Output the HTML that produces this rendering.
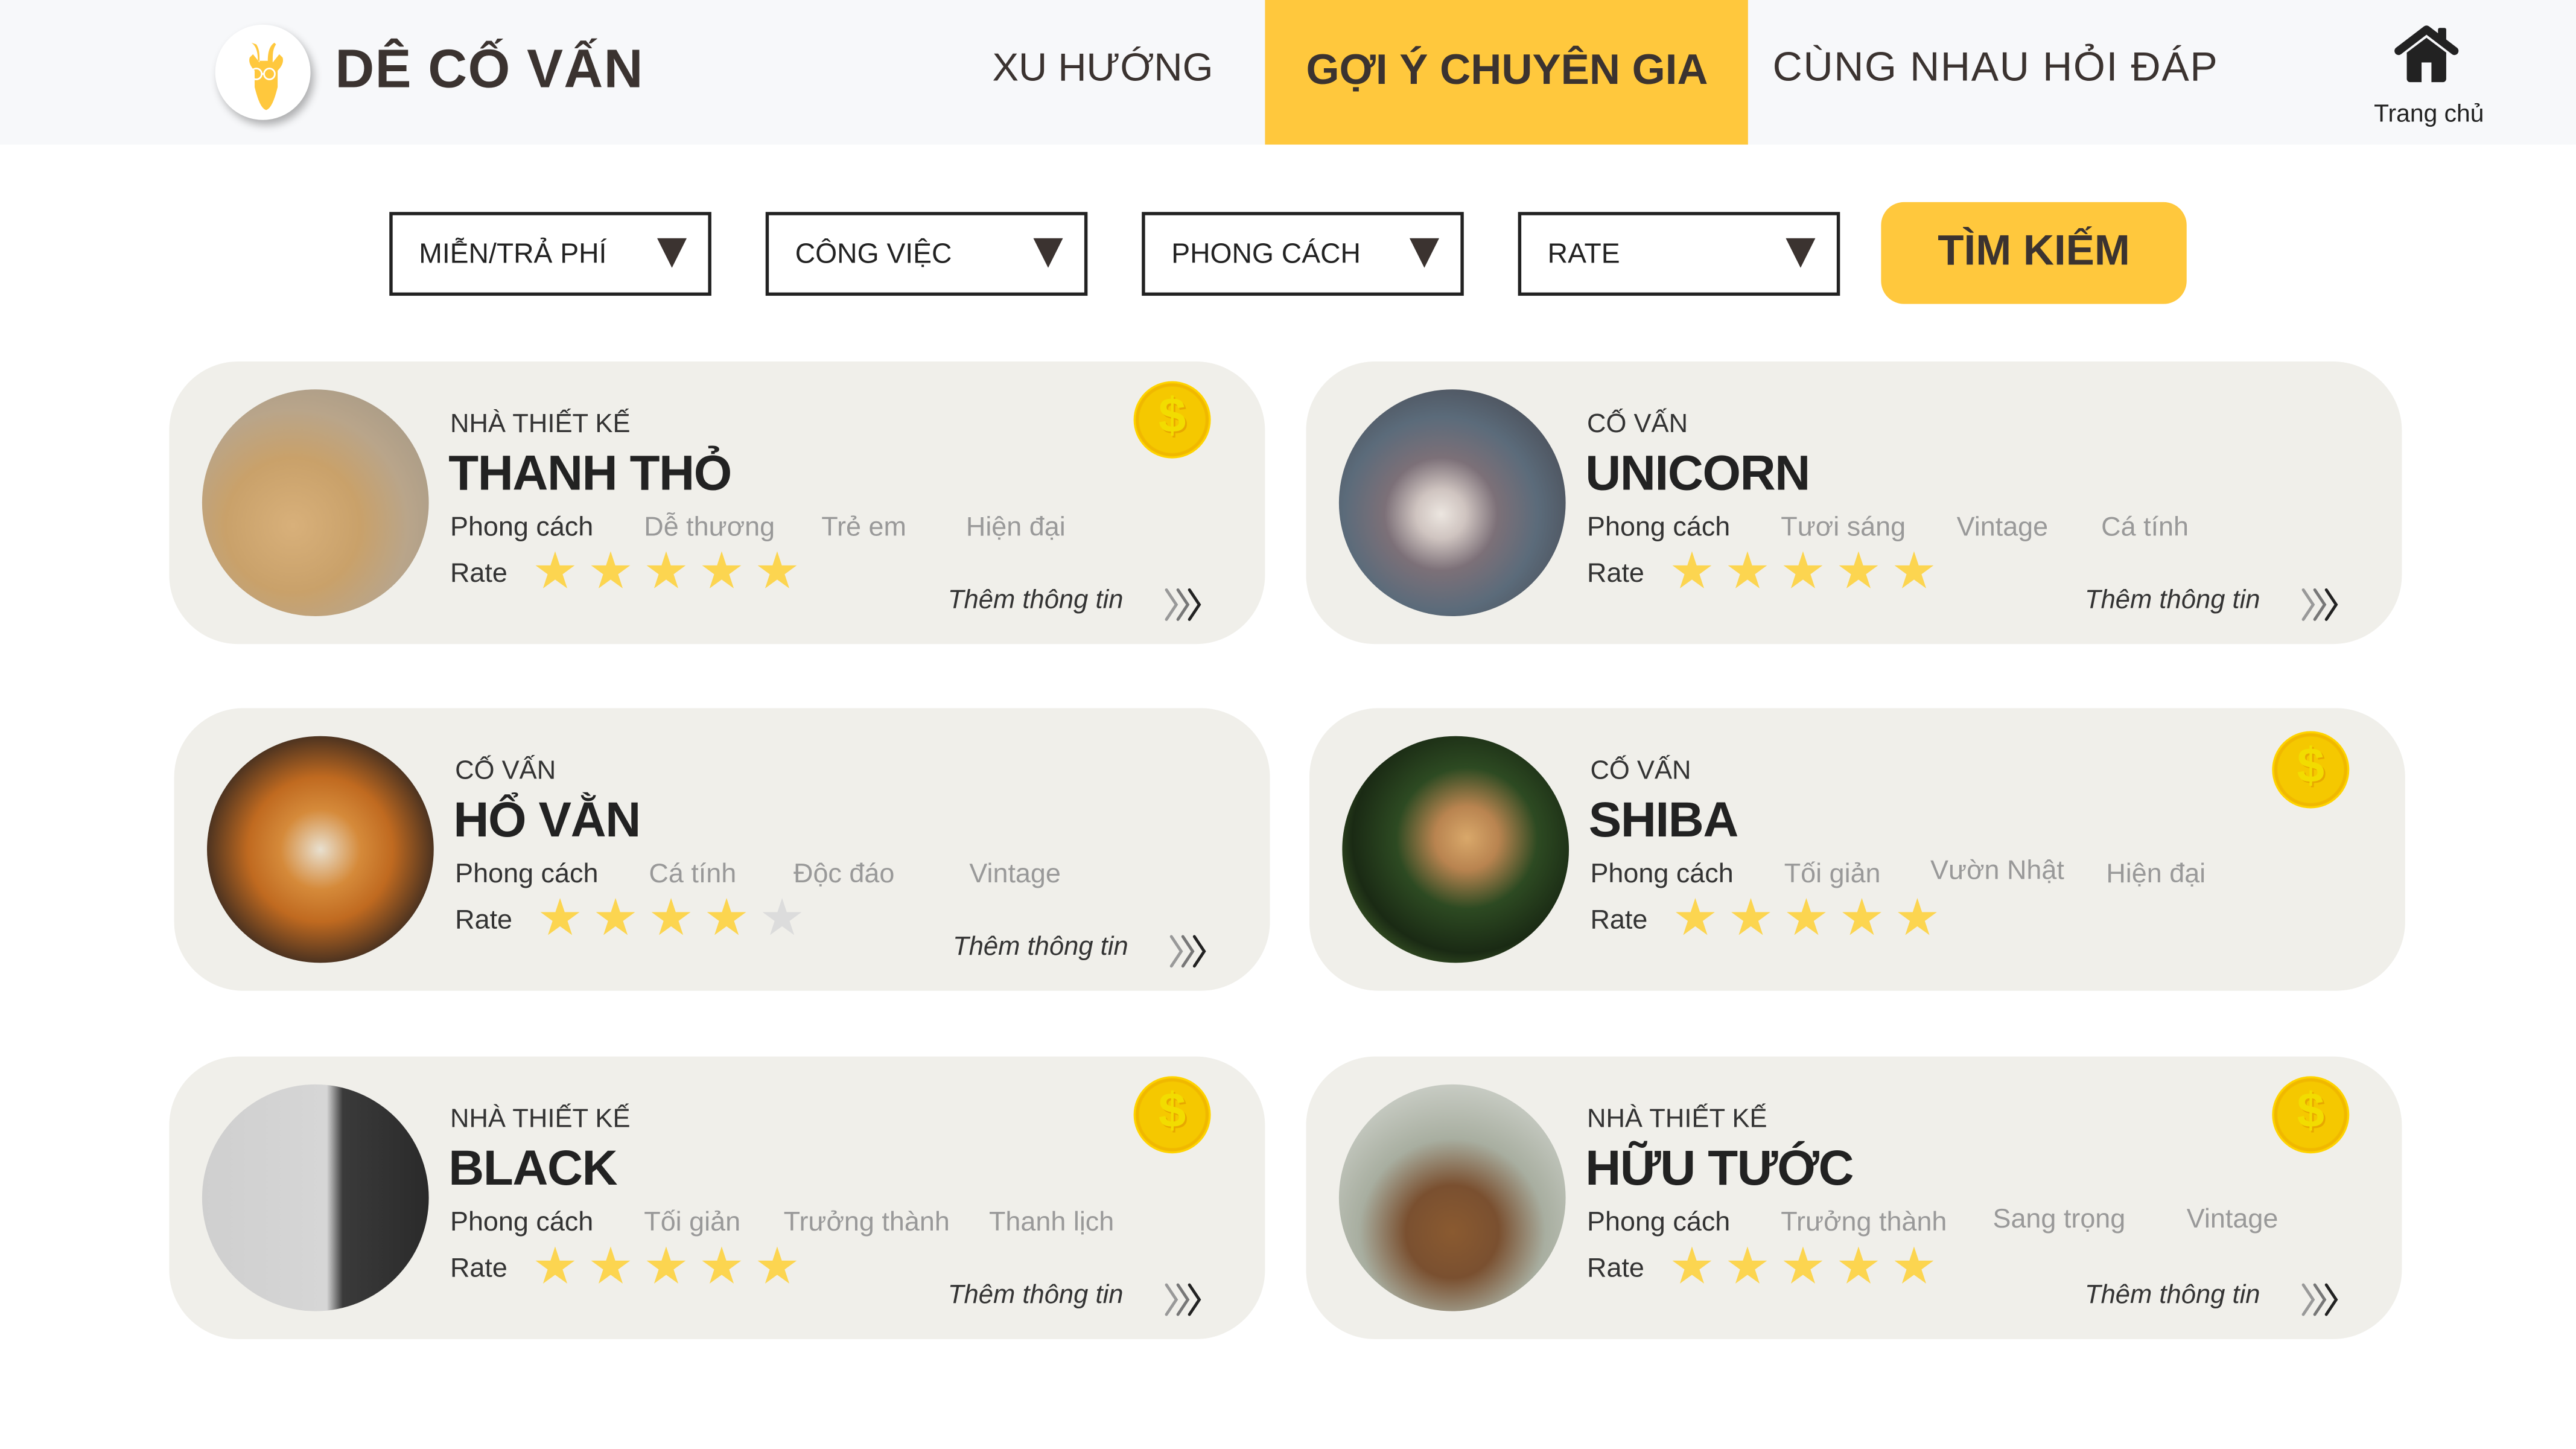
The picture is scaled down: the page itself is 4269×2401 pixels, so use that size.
<!DOCTYPE html>
<html><head><meta charset="utf-8">
<style>
*{margin:0;padding:0;box-sizing:border-box}
html,body{width:4269px;height:2400px;overflow:hidden;background:#fff}
#w{position:absolute;left:0;top:0;width:1568px;height:882px;transform:scale(2.72258);transform-origin:0 0;font-family:"Liberation Sans","DejaVu Sans",sans-serif;color:#333}
.a{position:absolute;white-space:nowrap}
.hdr{left:0;top:0;width:1568px;height:88px;background:#f7f8fa}
.nav{font-size:25px;color:#3b3330;top:27px}
.dd{border:2px solid #222;width:196px;height:51px;background:#fff;top:129px}
.dd span{position:absolute;left:16px;top:14px;font-size:17px;color:#222}
.dd i{position:absolute;right:13px;top:14px;width:0;height:0;border-left:9px solid transparent;border-right:9px solid transparent;border-top:18px solid #3b3330}
.card{width:667px;height:172px;background:#f0efea;border-radius:42px}
.pic{left:20px;top:17px;width:138px;height:138px;border-radius:50%}
.k{left:171px;top:30px;font-size:16px;color:#333}
.n{left:170px;top:52px;font-size:30px;font-weight:bold;color:#222;letter-spacing:-0.5px}
.t{top:92px;font-size:16.5px;color:#999}
.t0{color:#333}
.r{left:171px;top:120px;font-size:16.5px;color:#333}
.st{top:108px;font-size:31px;color:#fcd550;line-height:40px;letter-spacing:6px!important}
.more{left:474px;top:137px;font-size:16px;font-style:italic;color:#333}
.chev{left:605px;top:137px}
.coin{width:47px;height:47px;border-radius:50%;background:radial-gradient(circle,#f5c800 0 60%,#f0b800 62% 66%,#ffd400 68%);top:12px}
.coin b{position:absolute;left:0;top:5px;width:47px;text-align:center;font-size:30px;color:#f2dc00;font-weight:bold;text-shadow:1px 1px 0 #e8a800}
</style></head><body><div id="w">
<div class="a hdr"></div>
<div class="a" style="left:131px;top:15px;width:58px;height:58px;border-radius:50%;background:#fff;box-shadow:2px 3px 5px rgba(0,0,0,.3)">
<svg width="58" height="58" viewBox="0 0 58 58"><g fill="#ffc83d"><path d="M22 11c3 2 4 6 4 11h6c0-5 1-9 4-11l1 1c-2 3-2 6-2 11l4-5 2 2c1 3-1 6-3 8v10c-2 8-4 13-7 14-3-1-5-6-7-14V28c-2-2-4-5-3-8l2-2 4 5c0-5 0-8-2-11z"/></g><g fill="none" stroke="#fff" stroke-width="1"><circle cx="25" cy="30" r="3.3"/><circle cx="33" cy="30" r="3.3"/><path d="M28.3 30h1.4"/></g></svg></div>
<div class="a" style="left:204px;top:23px;font-size:33px;font-weight:bold;color:#3b3330;letter-spacing:0.5px">DÊ CỐ VẤN</div>
<div class="a nav" style="left:604px;font-size:24px;top:28px">XU HƯỚNG</div>
<div class="a" style="left:770px;top:0;width:294px;height:88px;background:#ffc83d"></div>
<div class="a nav" style="left:795px;font-weight:bold;font-size:26px">GỢI Ý CHUYÊN GIA</div>
<div class="a nav" style="left:1079px;letter-spacing:0.6px">CÙNG NHAU HỎI ĐÁP</div>
<svg class="a" style="left:1457px;top:12px" width="42" height="40" viewBox="0 0 42 40"><path d="M3 19L20 6 37 19" fill="none" stroke="#222" stroke-width="5" stroke-linecap="round" stroke-linejoin="round"/><rect x="27" y="5" width="5" height="9" rx="1" fill="#222"/><path d="M8 20L20 11 32 20V36a2 2 0 0 1-2 2H23V26h-6v12H10a2 2 0 0 1-2-2z" fill="#222"/></svg>
<div class="a" style="left:1445px;top:61px;font-size:15px;color:#222">Trang chủ</div>

<div class="a dd" style="left:237px"><span>MIỄN/TRẢ PHÍ</span><i></i></div>
<div class="a dd" style="left:466px"><span>CÔNG VIỆC</span><i></i></div>
<div class="a dd" style="left:695px"><span>PHONG CÁCH</span><i></i></div>
<div class="a dd" style="left:924px"><span>RATE</span><i></i></div>
<div class="a" style="left:1145px;top:123px;width:186px;height:62px;background:#ffc83d;border-radius:14px;text-align:center;line-height:58px;font-size:26px;font-weight:bold;color:#3b3330">TÌM KIẾM</div>

<div class="a card" style="left:103px;top:220px">
<div class="a pic" style="background:radial-gradient(circle at 40% 60%,#d8b07a 0,#c9a16a 35%,#b9a58a 60%,#9c9385 100%)"></div>
<div class="a k">NHÀ THIẾT KẾ</div><div class="a n">THANH THỎ</div>
<div class="a t t0" style="left:171px">Phong cách</div><div class="a t" style="left:289px">Dễ thương</div><div class="a t" style="left:397px">Trẻ em</div><div class="a t" style="left:485px">Hiện đại</div>
<div class="a r">Rate</div>
<div class="a st" style="left:221px">★★★★★</div>
<div class="a more">Thêm thông tin</div>
<svg class="a chev" width="26" height="22" viewBox="0 0 26 22"><g fill="none" stroke-width="1.8" stroke-linecap="round"><path d="M2 2l6 9-6 9" stroke="#999"/><path d="M9 2l6 9-6 9" stroke="#777"/><path d="M16 2l6 9-6 9" stroke="#222"/></g></svg>
<div class="a coin" style="left:587px;top:12px"><b>$</b></div>
</div>

<div class="a card" style="left:795px;top:220px">
<div class="a pic" style="background:radial-gradient(circle at 45% 55%,#ece6e0 0,#cfc4c0 14%,#7c7078 32%,#5b6b7a 55%,#3f3a40 100%)"></div>
<div class="a k">CỐ VẤN</div><div class="a n">UNICORN</div>
<div class="a t t0" style="left:171px">Phong cách</div><div class="a t" style="left:289px">Tươi sáng</div><div class="a t" style="left:396px">Vintage</div><div class="a t" style="left:484px">Cá tính</div>
<div class="a r">Rate</div>
<div class="a st" style="left:221px">★★★★★</div>
<div class="a more">Thêm thông tin</div>
<svg class="a chev" width="26" height="22" viewBox="0 0 26 22"><g fill="none" stroke-width="1.8" stroke-linecap="round"><path d="M2 2l6 9-6 9" stroke="#999"/><path d="M9 2l6 9-6 9" stroke="#777"/><path d="M16 2l6 9-6 9" stroke="#222"/></g></svg>
</div>

<div class="a card" style="left:106px;top:431px">
<div class="a pic" style="background:radial-gradient(circle at 50% 50%,#e8e0d0 0,#d58a3a 25%,#c06a20 45%,#3a2a20 75%,#8a6a4a 100%)"></div>
<div class="a k">CỐ VẤN</div><div class="a n">HỔ VẰN</div>
<div class="a t t0" style="left:171px">Phong cách</div><div class="a t" style="left:289px">Cá tính</div><div class="a t" style="left:377px">Độc đáo</div><div class="a t" style="left:484px">Vintage</div>
<div class="a r">Rate</div>
<div class="a st" style="left:221px">★★★★<span style="color:#dcdcdc">★</span></div>
<div class="a more">Thêm thông tin</div>
<svg class="a chev" width="26" height="22" viewBox="0 0 26 22"><g fill="none" stroke-width="1.8" stroke-linecap="round"><path d="M2 2l6 9-6 9" stroke="#999"/><path d="M9 2l6 9-6 9" stroke="#777"/><path d="M16 2l6 9-6 9" stroke="#222"/></g></svg>
</div>

<div class="a card" style="left:797px;top:431px">
<div class="a pic" style="background:radial-gradient(circle at 55% 45%,#d9a86a 0,#b98450 18%,#2d4a22 40%,#1a2a14 65%,#6a9a40 100%)"></div>
<div class="a k">CỐ VẤN</div><div class="a n">SHIBA</div>
<div class="a t t0" style="left:171px">Phong cách</div><div class="a t" style="left:289px">Tối giản</div><div class="a t" style="left:378px;top:90px">Vườn Nhật</div><div class="a t" style="left:485px">Hiện đại</div>
<div class="a r">Rate</div>
<div class="a st" style="left:221px">★★★★★</div>
<div class="a coin" style="left:586px;top:14px"><b>$</b></div>
</div>

<div class="a card" style="left:103px;top:643px">
<div class="a pic" style="background:linear-gradient(90deg,#cfcfcf 0,#d6d6d6 55%,#3a3a3a 62%,#2a2a2a 100%)"></div>
<div class="a k">NHÀ THIẾT KẾ</div><div class="a n">BLACK</div>
<div class="a t t0" style="left:171px">Phong cách</div><div class="a t" style="left:289px">Tối giản</div><div class="a t" style="left:374px">Trưởng thành</div><div class="a t" style="left:499px">Thanh lịch</div>
<div class="a r">Rate</div>
<div class="a st" style="left:221px">★★★★★</div>
<div class="a more">Thêm thông tin</div>
<svg class="a chev" width="26" height="22" viewBox="0 0 26 22"><g fill="none" stroke-width="1.8" stroke-linecap="round"><path d="M2 2l6 9-6 9" stroke="#999"/><path d="M9 2l6 9-6 9" stroke="#777"/><path d="M16 2l6 9-6 9" stroke="#222"/></g></svg>
<div class="a coin" style="left:587px;top:12px"><b>$</b></div>
</div>

<div class="a card" style="left:795px;top:643px">
<div class="a pic" style="background:radial-gradient(circle at 50% 65%,#8a5a30 0,#7a5030 25%,#a8aea0 50%,#c8ccc4 80%,#b0b4a8 100%)"></div>
<div class="a k">NHÀ THIẾT KẾ</div><div class="a n">HỮU TƯỚC</div>
<div class="a t t0" style="left:171px">Phong cách</div><div class="a t" style="left:289px">Trưởng thành</div><div class="a t" style="left:418px;top:90px">Sang trọng</div><div class="a t" style="left:536px;top:90px">Vintage</div>
<div class="a r">Rate</div>
<div class="a st" style="left:221px">★★★★★</div>
<div class="a more">Thêm thông tin</div>
<svg class="a chev" width="26" height="22" viewBox="0 0 26 22"><g fill="none" stroke-width="1.8" stroke-linecap="round"><path d="M2 2l6 9-6 9" stroke="#999"/><path d="M9 2l6 9-6 9" stroke="#777"/><path d="M16 2l6 9-6 9" stroke="#222"/></g></svg>
<div class="a coin" style="left:588px;top:12px"><b>$</b></div>
</div>
</div></body></html>
